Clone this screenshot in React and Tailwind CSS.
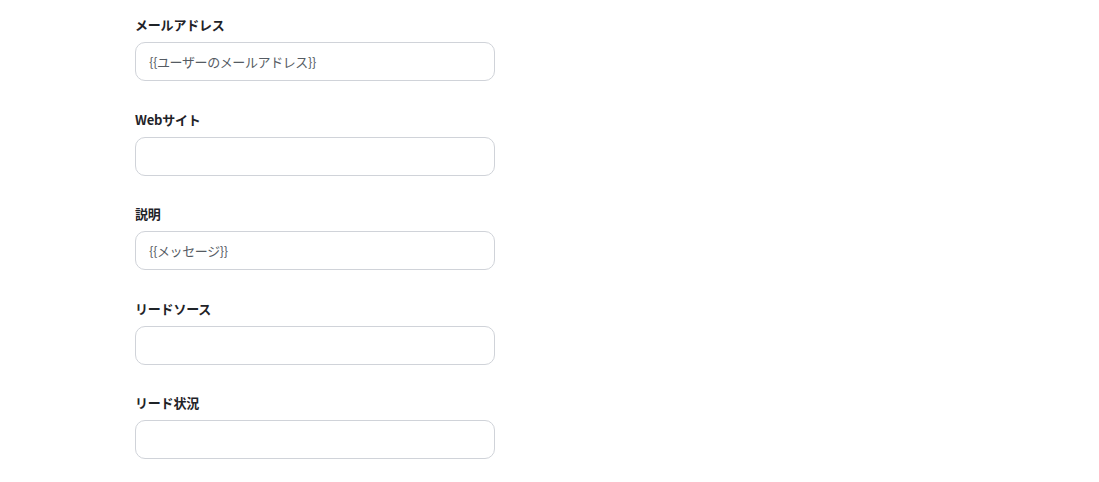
const fields = [
  { label: 'メールアドレス', value: '{{ユーザーのメールアドレス}}' },
  { label: 'Webサイト', value: '' },
  { label: '説明', value: '{{メッセージ}}' },
  { label: 'リードソース', value: '' },
  { label: 'リード状況', value: '' },
];

const App = () => {
  return (
    <div
      className="min-h-screen bg-white pl-[135px] pt-[16px]"
      style={{ fontFamily: '"Noto Sans CJK JP", "Noto Sans", sans-serif' }}
    >
      <div className="flex w-[360px] flex-col gap-[29.5px]">
        {fields.map((f) => (
          <div key={f.label} className="flex flex-col">
            <label className="mb-[8px] text-[13px] leading-[18px] font-bold tracking-[-0.2px] text-[#1f2328]">{f.label}</label>
            <div className="flex h-[39px] items-center rounded-[10px] border border-[#d0d3d9] bg-white px-[13px] text-[13px] tracking-[-0.4px] text-[#555b63]">
              {f.value}
            </div>
          </div>
        ))}
      </div>
    </div>
  );
};

export default App;
